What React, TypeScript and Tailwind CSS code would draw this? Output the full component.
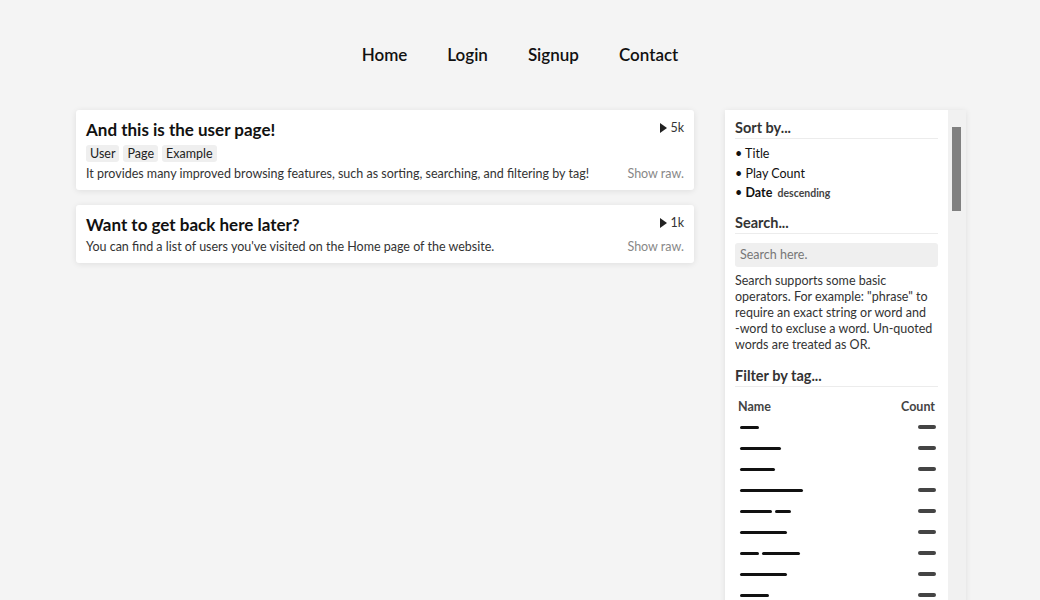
import React from "react";

const tagRows: number[][] = [
  [19],
  [41],
  [35],
  [63],
  [32, 16],
  [47],
  [19, 38],
  [47],
  [29],
];

function Card({
  title,
  plays,
  tags,
  text,
}: {
  title: string;
  plays: string;
  tags?: string[];
  text: string;
}) {
  return (
    <div className="bg-white rounded-[3px] shadow-[0_1px_6px_rgba(0,0,0,0.09)] px-[10px] pt-[9px] pb-[8px]">
      <div className="flex items-start justify-between">
        <h2 className="text-[17px] leading-[21px] font-bold text-[#111]">{title}</h2>
        <div className="flex items-center gap-[2px] mt-[1px] text-[12.5px] leading-[16px] text-[#333]">
          <svg width="8" height="10" viewBox="0 0 8 10">
            <path d="M0 0 L7 5 L0 10 Z" fill="#222" />
          </svg>
          <span>{plays}</span>
        </div>
      </div>
      {tags && (
        <div className="flex gap-[4px] mt-[5px]">
          {tags.map((t) => (
            <span
              key={t}
              className="bg-[#efefef] rounded-[3px] px-[4px] h-[17px] leading-[17px] text-[12.5px] text-[#222]"
            >
              {t}
            </span>
          ))}
        </div>
      )}
      <div className="flex justify-between mt-[4px] text-[12.5px] leading-[16px]">
        <span className="text-[#333]">{text}</span>
        <span className="text-[#888]">Show raw.</span>
      </div>
    </div>
  );
}

function Heading({ children }: { children: React.ReactNode }) {
  return (
    <h3 className="text-[14.5px] leading-[18px] font-bold text-[#333] border-b border-[#ececec] pb-[1px]">
      {children}
    </h3>
  );
}

export default function App() {
  return (
    <div className="min-h-screen bg-[#f4f4f4] font-['Lato',sans-serif] overflow-hidden">
      <nav className="flex justify-center gap-[40px] pt-[44px] text-[17px] leading-[21px] font-semibold text-[#111]">
        <span>Home</span>
        <span>Login</span>
        <span>Signup</span>
        <span>Contact</span>
      </nav>
      <div className="flex items-start gap-[31px] pl-[76px] pt-[45px]">
        <div className="w-[618px] flex flex-col gap-[15px]">
          <Card
            title="And this is the user page!"
            plays="5k"
            tags={["User", "Page", "Example"]}
            text="It provides many improved browsing features, such as sorting, searching, and filtering by tag!"
          />
          <Card
            title="Want to get back here later?"
            plays="1k"
            text="You can find a list of users you've visited on the Home page of the website."
          />
        </div>
        <aside className="flex h-[520px] shadow-[0_1px_6px_rgba(0,0,0,0.09)]">
          <div className="w-[223px] bg-white px-[10px] pt-[9px]">
            <Heading>Sort by...</Heading>
            <ul className="mt-[5px] text-[12.5px] leading-[19.5px] text-[#111]">
              <li>• Title</li>
              <li>• Play Count</li>
              <li>
                • <b>Date</b>{" "}
                <span className="text-[10.5px] font-bold text-[#444] ml-[2px]">descending</span>
              </li>
            </ul>
            <div className="mt-[10px]">
              <Heading>Search...</Heading>
            </div>
            <div className="mt-[9px] h-[24px] bg-[#efefef] rounded-[3px] px-[5px] text-[12.5px] leading-[24px] text-[#777]">
              Search here.
            </div>
            <p className="mt-[6px] text-[12.5px] leading-[16px] text-[#333]">
              {"Search supports some basic operators. For example: \"phrase\" to require an exact string or word and -\u2060word to excluse a word. Un-quoted words are treated as OR."}
            </p>
            <div className="mt-[14px]">
              <Heading>Filter by tag...</Heading>
            </div>
            <div className="flex justify-between px-[3px] mt-[13px] text-[12.5px] leading-[14px] font-bold text-[#444]">
              <span>Name</span>
              <span>Count</span>
            </div>
            <div className="mt-[3px] flex flex-col">
              {tagRows.map((row, i) => (
                <div key={i} className="h-[21px] flex items-center justify-between pl-[5px] pr-[2px]">
                  <div className="flex gap-[3px]">
                    {row.map((w, j) => (
                      <div key={j} className="h-[3px] bg-[#111] rounded-full" style={{ width: w }} />
                    ))}
                  </div>
                  <div className="h-[4px] w-[18px] bg-[#444] rounded-full" />
                </div>
              ))}
            </div>
          </div>
          <div className="w-[18px] bg-[#f1f1f1] pt-[17px] pl-[4px]">
            <div className="w-[9px] h-[84px] bg-[#808080]" />
          </div>
        </aside>
      </div>
    </div>
  );
}
